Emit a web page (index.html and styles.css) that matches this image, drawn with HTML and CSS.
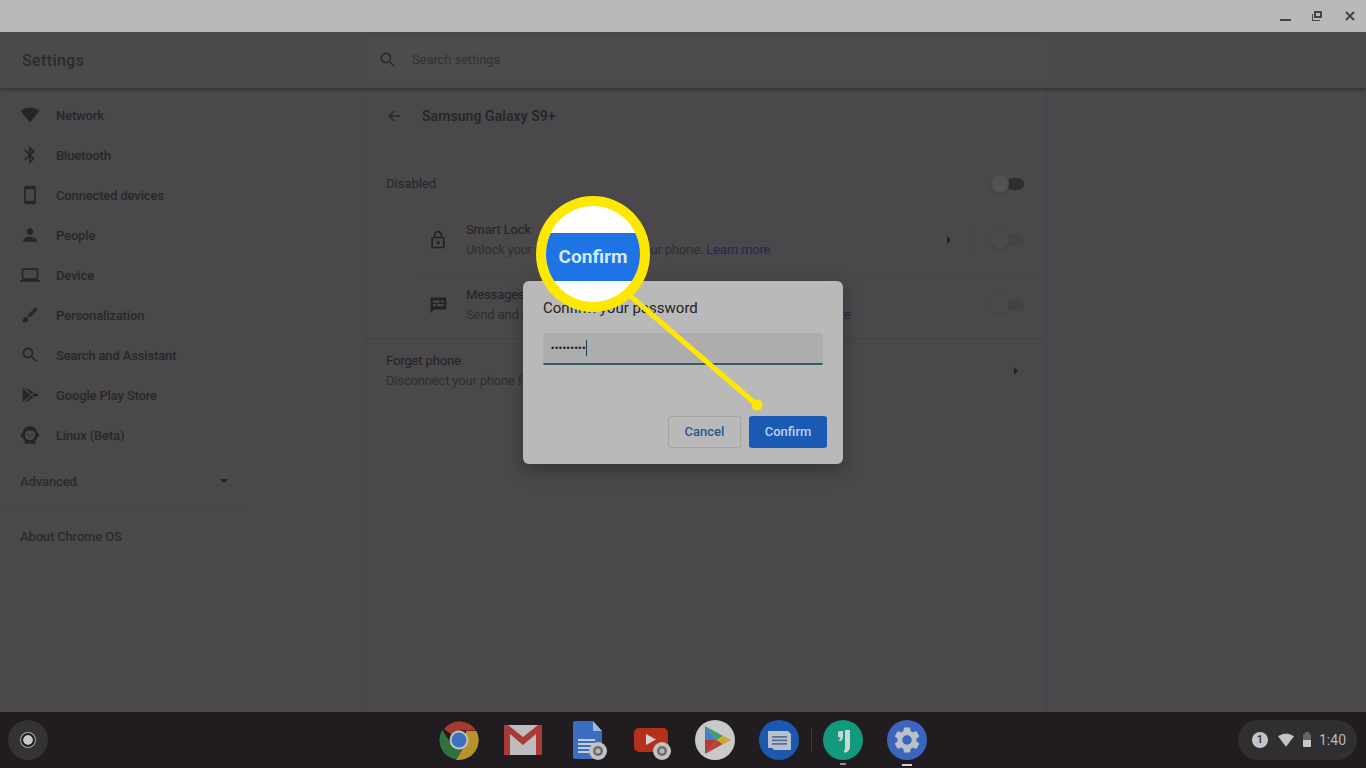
FILE: index.html
```html
<!DOCTYPE html>
<html lang="en">
<head>
<meta charset="utf-8">
<title>Settings</title>
<link rel="stylesheet" href="styles.css">
</head>
<body>
<div class="screen">
  <div class="titlebar">
    <svg class="win-icon" width="32" height="32" viewBox="0 0 32 32"><rect x="10" y="19" width="11" height="2" fill="#454545"/></svg>
    <svg class="win-icon" width="32" height="32" viewBox="0 0 32 32"><path d="M12 11h8v7h-8zM14 13v3h4v-3z" fill="#454545" fill-rule="evenodd"/><path d="M10 14h1v6h7v1h-8z" fill="#454545"/></svg>
    <svg class="win-icon" width="32" height="32" viewBox="0 0 32 32"><path d="M12 12l8 8M20 12l-8 8" stroke="#454545" stroke-width="2" fill="none"/></svg>
  </div>

  <header class="app-header">
    <div class="app-title">Settings</div>
    <div class="search">
      <svg class="search-icon" width="20" height="20" viewBox="0 0 24 24"><path d="M15.5 14h-.79l-.28-.27C15.41 12.59 16 11.11 16 9.5 16 5.91 13.09 3 9.5 3S3 5.91 3 9.5 5.91 16 9.5 16c1.61 0 3.09-.59 4.23-1.57l.27.28v.79l5 4.99L20.49 19l-4.99-5zm-6 0C7.01 14 5 11.99 5 9.5S7.01 5 9.5 5 14 7.01 14 9.5 11.99 14 9.5 14z"/></svg>
      <span class="search-text">Search settings</span>
    </div>
  </header>

  <div class="body">
    <nav class="sidebar">
      <a class="nav-item"><svg viewBox="0 0 24 24"><path d="M12 21l11.5-14C23 6.7 18.5 3 12 3S1 6.7.5 7L12 21z"/></svg><span>Network</span></a>
      <a class="nav-item"><svg viewBox="0 0 24 24"><path d="M17.71 7.71L12 2h-1v7.59L6.41 5 5 6.41 10.59 12 5 17.59 6.41 19 11 14.41V22h1l5.71-5.71-4.3-4.29 4.3-4.29zM13 5.83l1.88 1.88L13 9.59V5.83zm1.88 10.46L13 18.17v-3.76l1.88 1.88z"/></svg><span>Bluetooth</span></a>
      <a class="nav-item"><svg viewBox="0 0 24 24"><path d="M17 1.01L7 1c-1.1 0-2 .9-2 2v18c0 1.1.9 2 2 2h10c1.1 0 2-.9 2-2V3c0-1.1-.9-1.99-2-1.99zM17 19H7V5h10v14z"/></svg><span>Connected devices</span></a>
      <a class="nav-item"><svg viewBox="0 0 24 24"><path d="M12 12c2.21 0 4-1.79 4-4s-1.79-4-4-4-4 1.79-4 4 1.79 4 4 4zm0 2c-2.67 0-8 1.34-8 4v2h16v-2c0-2.66-5.33-4-8-4z"/></svg><span>People</span></a>
      <a class="nav-item"><svg viewBox="0 0 24 24"><path d="M20 18c1.1 0 1.99-.9 1.99-2L22 6c0-1.1-.9-2-2-2H4c-1.1 0-2 .9-2 2v10c0 1.1.9 2 2 2H0v2h24v-2h-4zM4 6h16v10H4V6z"/></svg><span>Device</span></a>
      <a class="nav-item"><svg viewBox="0 0 24 24"><path d="M7 14c-1.66 0-3 1.34-3 3 0 1.31-1.16 2-2 2 .92 1.22 2.49 2 4 2 2.21 0 4-1.79 4-4 0-1.66-1.34-3-3-3zm13.71-9.37l-1.34-1.34c-.39-.39-1.02-.39-1.41 0L9 12.25 11.75 15l8.96-8.96c.39-.39.39-1.02 0-1.41z"/></svg><span>Personalization</span></a>
      <a class="nav-item"><svg viewBox="0 0 24 24"><path d="M15.5 14h-.79l-.28-.27C15.41 12.59 16 11.11 16 9.5 16 5.91 13.09 3 9.5 3S3 5.91 3 9.5 5.91 16 9.5 16c1.61 0 3.09-.59 4.23-1.57l.27.28v.79l5 4.99L20.49 19l-4.99-5zm-6 0C7.01 14 5 11.99 5 9.5S7.01 5 9.5 5 14 7.01 14 9.5 11.99 14 9.5 14z"/></svg><span>Search and Assistant</span></a>
      <a class="nav-item"><svg viewBox="0 0 24 24"><path d="M3 3.5v17L12.5 12zM4.5 2.5L13.5 11l2.6-2.4zM4.5 21.500L13.500 13l2.600 2.400zM17.300 9.400L14.700 12l2.600 2.600 2.200-1.300h1.900c.9 0 .9-2.600 0-2.600h-1.900z"/></svg><span>Google Play Store</span></a>
      <a class="nav-item"><svg viewBox="0 0 24 24"><path fill-rule="evenodd" d="M12 1.500c-4.600 0-8 3.300-8.500 7.300C2 9.300 1 10.500 1 12s1 2.700 2.500 3.200c.5 1.900 1.500 3.500 3 4.500L5.500 21.500c-.3.600 0 1 .6 1h11.800c.6 0 .9-.4.6-1l-1-1.800c1.500-1 2.500-2.600 3-4.500 1.500-.5 2.500-1.700 2.500-3.200s-1-2.700-2.500-3.200C20 4.800 16.600 1.500 12 1.500zM12 6c1 1 2 1 3.500 1 1.500 1 2.500 3 2.500 5 0 3.500-2.500 6-6 6s-6-2.500-6-6c0-2 1-4 2.500-5C10 7 11 7 12 6zM9.300 10.500a1 1 0 1 0 0 2 1 1 0 0 0 0-2zM14.700 10.500a1 1 0 1 0 0 2 1 1 0 0 0 0-2zM12 13l-1.300 1.200L12 15.500l1.300-1.300z"/></svg><span>Linux (Beta)</span></a>
      <div class="advanced"><span>Advanced</span><i class="caret-down"></i></div>
      <div class="about">About Chrome OS</div>
    </nav>

    <main class="content">
      <div class="subpage-head">
        <svg width="18" height="18" viewBox="0 0 24 24"><path d="M20 11H7.830l5.590-5.590L12 4l-8 8 8 8 1.410-1.410L7.830 13H20v-2z"/></svg>
        <h1>Samsung Galaxy S9+</h1>
      </div>
      <div class="row-disabled">
        <span class="row-label">Disabled</span>
        <span class="toggle toggle-strong"></span>
      </div>
      <div class="feature feature-first">
        <svg width="20" height="20" viewBox="0 0 24 24"><path d="M12 17c1.100 0 2-.9 2-2s-.9-2-2-2-2 .9-2 2 .9 2 2 2zm6-9h-1V6c0-2.760-2.240-5-5-5S7 3.240 7 6v2H6c-1.100 0-2 .9-2 2v10c0 1.100.9 2 2 2h12c1.100 0 2-.9 2-2V10c0-1.100-.9-2-2-2zM8.900 6c0-1.710 1.390-3.100 3.100-3.100s3.100 1.390 3.100 3.100v2H8.900V6zM18 20H6V10h12v10z"/></svg>
        <div class="feature-text">
          <div class="line-title">Smart Lock</div>
          <div class="line-sub">Unlock your Chromebook with your phone. <a>Learn more</a></div>
        </div>
        <i class="caret-right"></i>
        <span class="vsep"></span>
        <span class="toggle"></span>
      </div>
      <div class="feature feature-second">
        <svg width="20" height="20" viewBox="0 0 24 24"><path fill-rule="evenodd" d="M3 3h19v14.500H7.500L3 22zM6 6.500v2.800h8V6.500zM15.500 6.500v2.800h3.500V6.500zM6 10.800v2.800h3.500v-2.800zM11 10.800v2.800h8v-2.800z"/></svg>
        <div class="feature-text">
          <div class="line-title">Messages</div>
          <div class="line-sub">Send and receive text messages from your Chromebook. <a>Learn more</a></div>
        </div>
        <span class="toggle"></span>
      </div>
      <div class="forget">
        <div class="feature-text">
          <div class="line-title">Forget phone</div>
          <div class="line-sub">Disconnect your phone from your Chromebook</div>
        </div>
        <i class="caret-right"></i>
      </div>
    </main>
  </div>

  <footer class="shelf">
    <div class="launcher-wrap">
      <div class="launcher"><span class="launcher-ring"></span></div>
    </div>
    <div class="apps">
      <div class="app">
        <svg width="40" height="40" viewBox="0 0 40 40">
          <path d="M20 20L5 9A19.500 19.500 0 0 1 37 10.500H20z" fill="#a63a2f"/>
          <path d="M3.200 10A19.800 19.800 0 0 0 17 39.600L24 27 13 25z" fill="#2f7440"/>
          <path d="M37.500 11A19.800 19.800 0 0 1 17 39.700L27 23V11z" fill="#b8922a"/>
          <circle cx="20" cy="20" r="9.500" fill="#c2c2c2"/><circle cx="20" cy="20" r="7.500" fill="#3f6fc0"/>
        </svg>
      </div>
      <div class="app">
        <svg width="40" height="40" viewBox="0 0 40 40">
          <rect x="1" y="5" width="38" height="30" rx="2" fill="#bdbdbd"/>
          <path d="M1 35V7c0-1 1-2 2-2h2l15 12L35 5h2c1 0 2 1 2 2v28h-6V14L20 25 7 14v21z" fill="#a83b36"/>
        </svg>
      </div>
      <div class="app">
        <svg width="40" height="40" viewBox="0 0 40 40">
          <path d="M8 1h18l9 10v26c0 1-1 2-2 2H8c-1 0-2-1-2-2V3c0-1 1-2 2-2z" fill="#3b6dc0"/>
          <path d="M26 1l9 10h-9z" fill="#9fb8df"/>
          <path d="M11 19h17v2H11zM11 23h17v2H11zM11 27h17v2H11zM11 31h11v2H11z" fill="#c6cedc"/>
          <circle cx="31" cy="31" r="9" fill="#c2c2c2"/><circle cx="31" cy="31" r="5" fill="#6b6b6b"/><circle cx="31" cy="31" r="2.500" fill="#b8b8b8"/>
        </svg>
      </div>
      <div class="app">
        <svg width="40" height="40" viewBox="0 0 40 40">
          <rect x="3" y="8" width="34" height="24" rx="5" fill="#b5301b"/>
          <path d="M15 14l10 5.500-10 5.500z" fill="#d4d4d4"/>
          <circle cx="31" cy="31" r="9" fill="#c2c2c2"/><circle cx="31" cy="31" r="5" fill="#6b6b6b"/><circle cx="31" cy="31" r="2.500" fill="#b8b8b8"/>
        </svg>
      </div>
      <div class="app">
        <svg width="40" height="40" viewBox="0 0 40 40">
          <circle cx="20" cy="20" r="20" fill="#c9c9c9"/>
          <path d="M10 6v14h12z" fill="#3f81c4"/><path d="M10 34V20h12z" fill="#b23c34"/>
          <path d="M10 6l12 14 6-4z" fill="#37a06c"/><path d="M10 34l12-14 6 4z" fill="#b5423a"/>
          <path d="M28 15.500l-6 4.500 6 4.500 8-4.500z" fill="#cfa92c"/>
        </svg>
      </div>
      <div class="app">
        <svg width="40" height="40" viewBox="0 0 40 40">
          <circle cx="20" cy="20" r="20" fill="#1b59b0"/>
          <path d="M9 11h20l3 3v15c0 .6-.4 1-1 1H15l-2-2h-3c-.6 0-1-.4-1-1z" fill="#b9c0cc"/>
          <path d="M13 16h15v1.800H13zM13 19.500h15v1.800H13zM13 23h15v1.800H13z" fill="#5b6f92"/>
        </svg>
      </div>
      <div class="app app-pinned app-sep">
        <svg width="40" height="40" viewBox="0 0 40 40">
          <circle cx="20" cy="20" r="20" fill="#13997c"/>
          <path d="M15 13c0-1.500 1-2 2-2h3v6c0 2-1 4-3.500 4.500l-.5-2c1-.3 1.500-1 1.500-2H17c-1 0-2-.5-2-2z" fill="#c9d8d3"/>
          <path d="M22 10h5v16c0 4-2 6-5 7l-1.500-2c1.500-.8 1.500-2 1.500-4z" fill="#c9d8d3"/>
        </svg>
      </div>
      <div class="app app-active">
        <svg width="40" height="40" viewBox="0 0 40 40">
          <circle cx="20" cy="20" r="20" fill="#3a66bf"/>
          <path transform="translate(4.400 4.400) scale(1.300)" d="M19.140 12.940c.04-.3.060-.61.060-.94 0-.32-.02-.64-.07-.94l2.030-1.580c.18-.14.23-.41.120-.61l-1.920-3.320c-.12-.22-.37-.29-.59-.22l-2.390.96c-.5-.38-1.030-.7-1.620-.94l-.36-2.540c-.04-.24-.24-.41-.48-.41h-3.840c-.24 0-.43.170-.47.410l-.36 2.540c-.59.240-1.130.570-1.620.94l-2.390-.96c-.22-.08-.47 0-.59.220L2.740 8.870c-.12.210-.08.470.12.610l2.030 1.580c-.05.3-.09.630-.09.940s.02.640.07.940l-2.030 1.580c-.18.140-.23.410-.12.610l1.920 3.320c.12.220.37.290.59.220l2.390-.96c.5.380 1.030.7 1.620.94l.36 2.540c.05.240.24.410.48.410h3.840c.24 0 .44-.17.47-.41l.36-2.540c.59-.24 1.130-.56 1.620-.94l2.390.96c.22.080.47 0 .59-.22l1.920-3.320c.12-.22.070-.47-.12-.61l-2.010-1.580zM12 15.600c-1.980 0-3.600-1.620-3.600-3.600s1.620-3.600 3.600-3.600 3.600 1.620 3.600 3.600-1.620 3.600-3.600 3.600z" fill="#bcc1c9"/>
        </svg>
      </div>
    </div>
    <div class="status-wrap">
      <div class="status">
        <span class="badge">1</span>
        <svg width="16" height="16" viewBox="0 0 24 24"><path d="M12 22L24 6.500C23 5.700 18.500 2.500 12 2.500S1 5.700 0 6.500z" fill="#c4c4c4"/></svg>
        <svg width="10" height="16" viewBox="0 0 10 16"><rect x="3" y="0" width="4" height="2" fill="#666"/><rect x="1" y="2" width="8" height="13" rx="1" fill="#666"/><rect x="1" y="8" width="8" height="7" rx="1" fill="#c9c9c9"/></svg>
        <span class="clock">1:40</span>
      </div>
    </div>
  </footer>

  <section class="dialog">
    <div class="dialog-title">Confirm your password</div>
    <div class="dialog-input"><span class="dots">•••••••••</span><i class="cursor"></i></div>
    <div class="dialog-actions">
      <button class="btn btn-cancel">Cancel</button>
      <button class="btn btn-confirm">Confirm</button>
    </div>
  </section>

  <svg class="pointer" width="1366" height="768" viewBox="0 0 1366 768">
    <path d="M628 294L757 405" stroke="#ffe800" stroke-width="5" fill="none"/>
    <circle cx="757" cy="405" r="5.500" fill="#ffe800"/>
  </svg>
  <div class="lens">
    <div class="lens-band">Confirm</div>
  </div>
</div>
</body>
</html>
```

FILE: styles.css
```css
* { box-sizing: border-box; }
html, body { margin: 0; padding: 0; height: 100%; }
body { font-family: Roboto, "Liberation Sans", sans-serif; background: #4a484a; overflow: hidden; }

.screen { position: relative; width: 1366px; height: 768px; display: flex; flex-direction: column; background: #4a484a; color: #252325; overflow: hidden; }

.titlebar { height: 32px; flex: none; background: #b9b9b9; display: flex; justify-content: flex-end; }
.win-icon { display: block; }

.app-header { height: 56px; flex: none; background: #4a4a4a; display: flex; box-shadow: 0 2px 3px rgba(0,0,0,.28); position: relative; z-index: 1; }
.app-title { width: 366px; padding: 0 0 0 22px; font-size: 16px; font-weight: 500; line-height: 57px; letter-spacing: .4px; color: #2b2a2c; }
.search { width: 680px; margin: 5px 0 6px; display: flex; align-items: center; padding-left: 12px; background: #4c4c4c; }
.search-icon { fill: #2c2c2c; }
.search-text { margin-left: 14px; font-size: 13px; letter-spacing: -.1px; color: #323133; }

.body { flex: 1; display: flex; min-height: 0; }
.sidebar { width: 365px; flex: none; padding-top: 7px; }
.nav-item { height: 40px; display: flex; align-items: center; padding-left: 20px; font-size: 13px; font-weight: 500; letter-spacing: -.15px; color: #282729; }
.nav-item svg { width: 20px; height: 20px; fill: #262527; flex: none; }
.nav-item span { margin-left: 16px; }
.advanced { height: 54px; width: 248px; padding: 0 20px 1px; display: flex; align-items: center; justify-content: space-between; font-size: 13px; font-weight: 500; letter-spacing: -.1px; color: #2c2b2d; border-bottom: 1px solid #454345; }
.caret-down { width: 0; height: 0; border: 4px solid transparent; border-top: 4px solid #232224; border-bottom: 0; }
.about { padding: 20px 20px 0; font-size: 13px; font-weight: 500; letter-spacing: -.15px; line-height: 15px; color: #2c2b2d; }

.content { width: 682px; flex: none; border-left: 1px solid #434248; border-right: 1px solid #434248; padding-top: 1px; }
.subpage-head { height: 54px; display: flex; align-items: center; padding-left: 19px; }
.subpage-head svg { fill: #2b2a2c; }
.subpage-head h1 { margin: 0 0 0 19px; font-size: 14px; font-weight: 500; letter-spacing: .08px; color: #252426; }
.row-disabled { height: 46px; margin-top: 18px; display: flex; align-items: center; justify-content: space-between; padding: 0 22px 0 20px; font-size: 13px; color: #262527; }
.row-label { margin-bottom: 2px; }

.toggle { position: relative; display: block; width: 34px; height: 20px; flex: none; }
.toggle::before { content: ""; position: absolute; left: 17px; top: 4px; width: 17px; height: 12px; border-radius: 6px; background: #434244; }
.toggle::after { content: ""; position: absolute; left: 1px; top: 1px; width: 18px; height: 18px; border-radius: 50%; background: #4b4a4c; box-shadow: 0 1px 2px rgba(0,0,0,.12); }
.toggle-strong::before { background: #2e2d2f; }
.toggle-strong::after { background: #525153; box-shadow: 0 1px 2px rgba(0,0,0,.25); }

.feature { position: relative; height: 65px; margin-left: 54px; padding-right: 22px; display: flex; align-items: center; border-top: 1px solid #464547; }
.feature-first { border-top: 0; height: 66px; }
.feature-second { padding-bottom: 2px; }
.feature > svg { fill: #232224; margin: 0 18px 0 8px; flex: none; }
.feature-text { flex: 1; }
.line-title { font-size: 13px; line-height: 20px; letter-spacing: -.12px; color: #232224; }
.line-sub { font-size: 13px; line-height: 20px; letter-spacing: -.17px; color: #2f2e30; }
.line-sub a { color: #1f2a55; }
.caret-right { flex: none; width: 0; height: 0; border: 4px solid transparent; border-left: 4px solid #232224; border-right: 0; }
.vsep { width: 1px; height: 32px; background: #464547; margin: 0 14px 0 24px; }

.forget { height: 65px; display: flex; align-items: center; padding: 0 28px 0 20px; border-top: 1px solid #434244; }

.shelf { height: 56px; flex: none; background: #201c1f; display: grid; grid-template-columns: 1fr auto 1fr; align-items: center; }
.launcher-wrap { padding-left: 8px; }
.launcher { width: 40px; height: 40px; border-radius: 50%; background: #353235; display: flex; align-items: center; justify-content: center; }
.launcher-ring { width: 14px; height: 14px; border-radius: 50%; background: #c9c9c9; border: 2px solid #201c1f; box-shadow: 0 0 0 1px #a8a8a8; background-clip: padding-box; }
.apps { display: flex; }
.app { position: relative; width: 64px; height: 56px; display: flex; align-items: center; justify-content: center; }
.app svg { display: block; }
.app-sep::before { content: ""; position: absolute; left: 0; top: 16px; width: 1px; height: 24px; background: #3a3739; }
.app-pinned::after { content: ""; position: absolute; left: 29px; bottom: 3px; width: 6px; height: 2px; background: #8f8f8f; }
.app-active::after { content: ""; position: absolute; left: 27px; bottom: 2px; width: 10px; height: 2px; background: #d0d0d0; }
.status-wrap { display: flex; justify-content: flex-end; padding-right: 9px; }
.status { width: 119px; height: 40px; border-radius: 20px; background: #312e31; display: flex; align-items: center; padding-left: 14px; }
.badge { width: 16px; height: 16px; border-radius: 50%; background: #c4c4c4; color: #2b292b; font-size: 11px; font-weight: 500; line-height: 16px; text-align: center; }
.status svg:nth-of-type(1) { margin-left: 10px; }
.status svg:nth-of-type(2) { margin-left: 8px; }
.clock { margin-left: 7px; font-size: 14px; color: #b9b9b9; }

.dialog { position: absolute; left: 523px; top: 281px; width: 320px; height: 183px; border-radius: 6px; background: #b9b9b9; box-shadow: 0 6px 18px rgba(0,0,0,.3); padding: 16px 16px 16px 20px; display: flex; flex-direction: column; z-index: 2; }
.dialog-title { font-size: 15px; line-height: 22px; color: #242424; }
.dialog-input { margin-top: 14px; width: 280px; height: 32px; background: #adadad; border-bottom: 2px solid #2e5f66; border-radius: 2px; display: flex; align-items: center; padding-left: 8px; }
.dots { font-family: "Liberation Sans", sans-serif; font-size: 9px; letter-spacing: .75px; color: #222; }
.cursor { display: block; width: 1px; height: 16px; background: #1c3c58; margin-left: 0; }
.dialog-actions { margin-top: auto; display: flex; justify-content: flex-end; gap: 8px; }
.btn { height: 32px; border-radius: 3px; font-family: inherit; font-size: 13px; font-weight: 500; padding: 0 0 2px; }
.btn-cancel { width: 73px; background: transparent; border: 1px solid #a2a2a2; color: #2a5590; }
.btn-confirm { width: 78px; background: #1a5ab5; border: 0; color: #bcd0ea; }

.pointer { position: absolute; left: 0; top: 0; z-index: 3; pointer-events: none; }
.lens { position: absolute; left: 536px; top: 196px; width: 114px; height: 116px; border-radius: 50%; border: 10px solid #ffe800; background: #fff; display: flex; align-items: center; overflow: hidden; z-index: 4; }
.lens-band { width: 100%; height: 48px; margin-top: 5px; background: #1e74e4; color: #cfeaff; font-size: 19px; font-weight: 700; line-height: 47px; text-align: center; }
```
